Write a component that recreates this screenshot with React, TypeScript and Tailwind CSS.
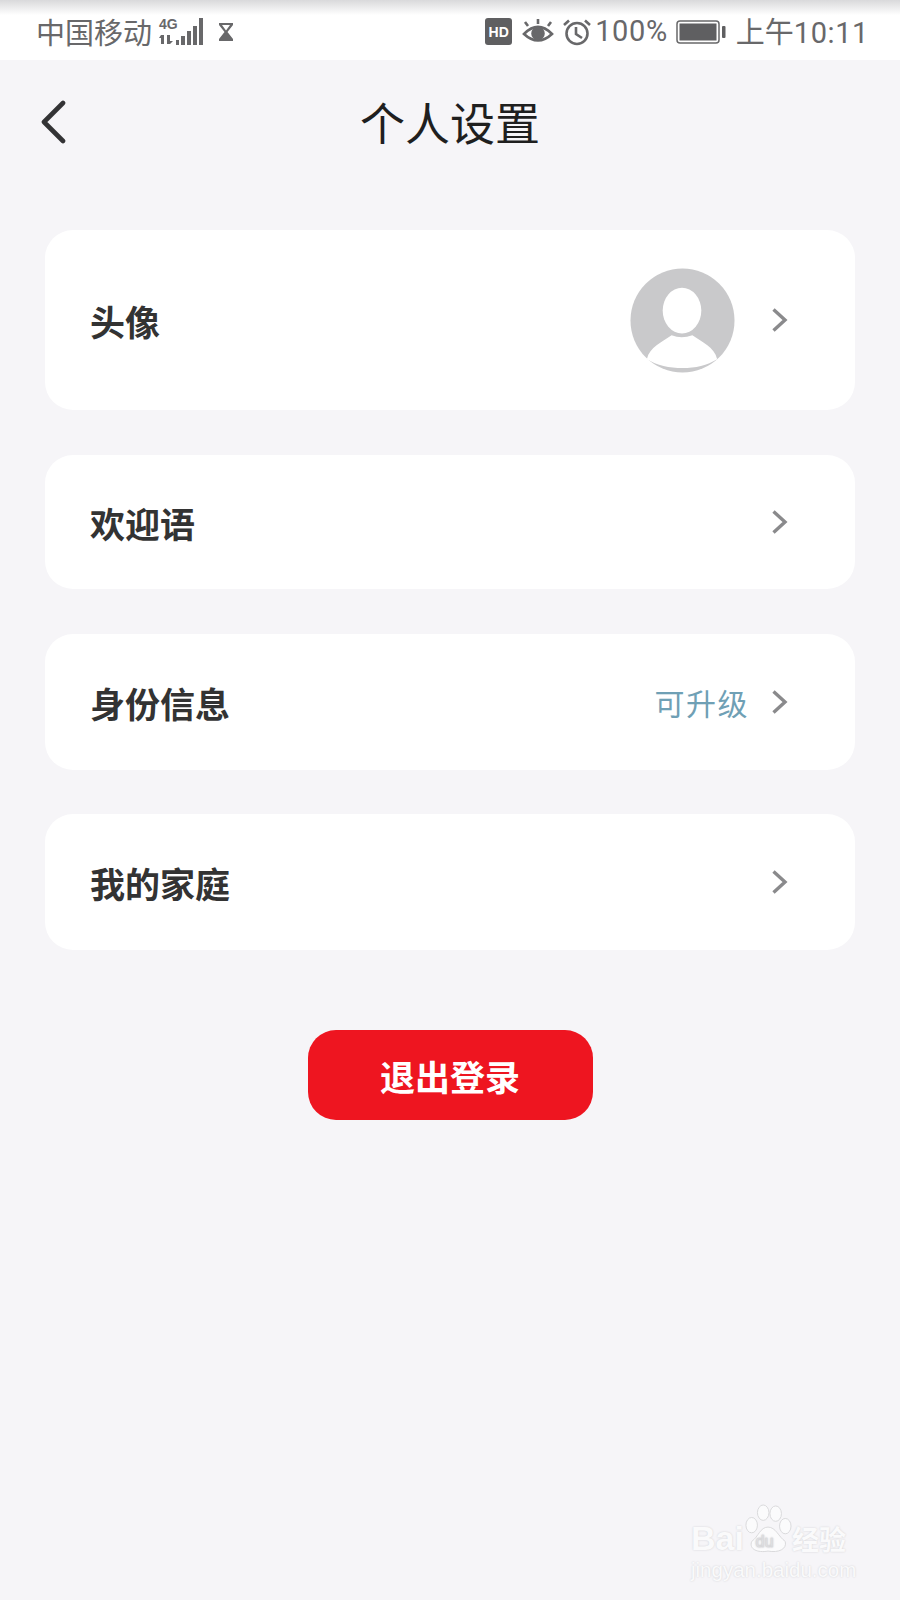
const cjk = "font-['Noto_Sans_CJK_SC','Noto_Sans',sans-serif]";

function Chevron() {
  return (
    <svg width="20" height="28" viewBox="0 0 20 28" fill="none" className="shrink-0">
      <path d="M3.5 3.5 L15 14 L3.5 24.5" stroke="#8a8a8c" strokeWidth="3.4" strokeLinejoin="miter" />
    </svg>
  );
}

function Row({ label, height, hint, avatar }: { label: string; height: string; hint?: string; avatar?: boolean }) {
  return (
    <div className={`flex items-center rounded-[28px] bg-white pl-[45px] pr-[65px] ${height}`}>
      <span className="flex-1 text-[35px] font-bold leading-none text-[#333333]">{label}</span>
      {hint && <span className="mr-[21px] text-[30px] leading-none tracking-[1.5px] text-[#6fa0b5]">{hint}</span>}
      {avatar && (
        <svg width="105" height="105" viewBox="0 0 106 106" className="mr-[35px] shrink-0">
          <circle cx="53" cy="53" r="52.5" fill="#c9c9cb" />
          <ellipse cx="52.5" cy="43" rx="19.5" ry="23" fill="#fff" />
          <path d="M17 92 C20 80 32 75 42 68 Q52 72 63 68 C73 75 85 80 88 92 C78 98 66 101 53 101 C40 101 27 98 17 92 Z" fill="#fff" />
        </svg>
      )}
      <Chevron />
    </div>
  );
}

function StatusBar() {
  return (
    <div className="flex h-[60px] items-center justify-between bg-gradient-to-b from-[#d9d9db] via-white via-[25%] to-white pl-[36px] pr-[31px] pt-[3px] text-[#68686a]">
      <div className="flex items-center">
        <span className="text-[29px] leading-none">中国移动</span>
        <svg width="46" height="30" viewBox="0 0 46 30" className="ml-[6px]" fill="#68686a">
          <text x="1" y="12" fontSize="14" fontWeight="700" fontFamily="Liberation Sans">4G</text>
          <path d="M3 18 H6 V27 H3 Z M1 21 L3 18 V21 Z M9 18 H12 V27 H9 Z M12 24 H15 L12 27 Z" />
          <rect x="18" y="23" width="3" height="5" />
          <rect x="23" y="19" width="4" height="9" />
          <rect x="29" y="14" width="4" height="14" />
          <rect x="35" y="9" width="4" height="19" />
          <rect x="41" y="1" width="4" height="27" />
        </svg>
        <svg width="16" height="24" viewBox="0 0 16 24" className="ml-[14px]" fill="#68686a">
          <path d="M1 3 H15 V5 L9.5 12 L15 19 V21 H1 V19 L6.5 12 L1 5 Z M4 5 L8 10.5 L12 5 Z" fillRule="evenodd" />
        </svg>
      </div>
      <div className="flex items-center">
        <span className="flex h-[27px] w-[27px] items-center justify-center rounded-[3px] bg-[#5f5f61] font-['Liberation_Sans',sans-serif] text-[14px] font-bold leading-none text-white">HD</span>
        <svg width="32" height="28" viewBox="0 0 32 28" className="ml-[10px]" fill="none" stroke="#68686a" strokeWidth="2.6">
          <path d="M2 16 Q16 2 30 16 Q16 29 2 16 Z" />
          <circle cx="16" cy="15.5" r="5.5" fill="#68686a" />
          <path d="M6 8 L3 4 M16 6 V1 M26 8 L29 4" />
        </svg>
        <svg width="28" height="28" viewBox="0 0 28 28" className="ml-[9px]" fill="none" stroke="#68686a" strokeWidth="2.6">
          <circle cx="14" cy="15.5" r="10.5" />
          <path d="M13 9 V16 L19 20" />
          <path d="M1 7 L6 2.5 M27 7 L22 2.5" />
        </svg>
        <span className="ml-[4px] font-['Roboto',sans-serif] text-[29px] leading-none tracking-[0.6px]">100%</span>
        <svg width="50" height="26" viewBox="0 0 50 26" className="ml-[8px]">
          <rect x="1" y="2" width="42" height="22" rx="3" fill="none" stroke="#68686a" strokeWidth="1.5" />
          <rect x="3.5" y="4.5" width="37" height="17" fill="#5f5f61" />
          <rect x="46" y="7" width="3.5" height="12" rx="1" fill="#5f5f61" />
        </svg>
        <span className="ml-[10px] text-[29px] leading-none">上午<span className="font-['Roboto',sans-serif] tracking-[0.6px]">10:11</span></span>
      </div>
    </div>
  );
}

function Watermark() {
  return (
    <div className="absolute left-[691px] top-[1503px] select-none font-['Liberation_Sans',sans-serif] text-[#fafafb] [text-shadow:0_0_2px_#cfcfd2]">
      <div className="flex items-end">
        <span className="text-[34px] font-bold leading-[34px]">Bai</span>
        <svg width="48" height="52" viewBox="0 0 50 52" fill="#fbfbfc" stroke="#d8d8da" strokeWidth="1">
          <ellipse cx="8" cy="22" rx="6" ry="8" />
          <ellipse cx="20" cy="9" rx="6" ry="8" />
          <ellipse cx="33" cy="10" rx="6" ry="8" />
          <ellipse cx="43" cy="23" rx="6" ry="8" />
          <path d="M25 24 C33 24 36 34 43 39 C45 47 36 51 25 49 C14 51 5 47 8 39 C15 34 17 24 25 24 Z" />
          <text x="12" y="45" fontSize="17" fill="#f4f4f6" strokeWidth="0.7">du</text>
        </svg>
        <span className={`text-[27px] font-bold leading-[32px] ${cjk}`}>经验</span>
      </div>
      <div className="mt-[5px] text-[20.5px] leading-none">jingyan.baidu.com</div>
    </div>
  );
}

export default function App() {
  return (
    <div className={`relative h-[1600px] w-[900px] overflow-hidden bg-[#f6f5f8] ${cjk}`}>
      <StatusBar />
      <div className="relative flex h-[130px] items-center justify-center pb-[7px]">
        <svg width="28" height="44" viewBox="0 0 28 44" fill="none" className="absolute left-[39px] top-[40px]">
          <path d="M24 3 L5 22 L24 41" stroke="#333335" strokeWidth="4.6" strokeLinecap="round" strokeLinejoin="round" />
        </svg>
        <h1 className="text-[45px] font-normal leading-none text-[#1f1f1f]">个人设置</h1>
      </div>
      <div className="mt-[40px] flex flex-col px-[45px]">
        <Row label="头像" height="h-[180px]" avatar />
        <div className="h-[45px]" />
        <Row label="欢迎语" height="h-[134px]" />
        <div className="h-[45px]" />
        <Row label="身份信息" height="h-[136px]" hint="可升级" />
        <div className="h-[44px]" />
        <Row label="我的家庭" height="h-[136px]" />
      </div>
      <div className="mt-[80px] flex justify-center">
        <button className="flex h-[90px] w-[285px] items-center justify-center rounded-[28px] bg-[#ee1520] text-[35px] font-bold leading-none text-white">退出登录</button>
      </div>
      <Watermark />
    </div>
  );
}
